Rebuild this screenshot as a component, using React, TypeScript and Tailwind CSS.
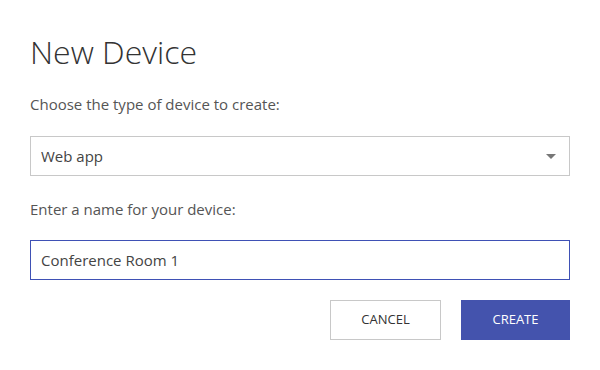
import React, { useState } from "react";

export default function App() {
  const [deviceType, setDeviceType] = useState("Web app");
  const [name, setName] = useState("Conference Room 1");

  return (
    <div
      className="w-[600px] h-[370px] bg-white px-[30px] pt-[32px]"
      style={{ fontFamily: '"Open Sans", "Noto Sans", sans-serif' }}
    >
      <h1 className="text-[32px] font-light leading-[40px] text-[#333333]">New Device</h1>

      <p className="mt-[22px] text-[15px] leading-[20px] text-[#555555]">
        Choose the type of device to create:
      </p>

      <div className="relative mt-[22px]">
        <select
          value={deviceType}
          onChange={(e) => setDeviceType(e.target.value)}
          className="block h-[40px] w-full appearance-none border border-[#c8c8c8] bg-white pl-[10px] text-[15px] text-[#444444] outline-none"
        >
          <option>Web app</option>
          <option>Mobile app</option>
          <option>Desktop app</option>
        </select>
        <svg
          className="pointer-events-none absolute right-[14px] top-[18px]"
          width="10"
          height="5"
          viewBox="0 0 10 5"
        >
          <path d="M0 0h10L5 5z" fill="#777777" />
        </svg>
      </div>

      <p className="mt-[23px] text-[15px] leading-[20px] text-[#555555]">
        Enter a name for your device:
      </p>

      <input
        type="text"
        value={name}
        onChange={(e) => setName(e.target.value)}
        className="mt-[21px] block h-[40px] w-full border border-[#3f51b5] px-[10px] text-[15px] text-[#444444] outline-none"
      />

      <div className="mt-[20px] flex justify-end gap-[20px]">
        <button className="h-[40px] w-[111px] border border-[#c8c8c8] bg-white text-[13px] text-[#333333]">
          CANCEL
        </button>
        <button className="h-[40px] w-[109px] bg-[#4453ad] text-[13px] text-white">
          CREATE
        </button>
      </div>
    </div>
  );
}
